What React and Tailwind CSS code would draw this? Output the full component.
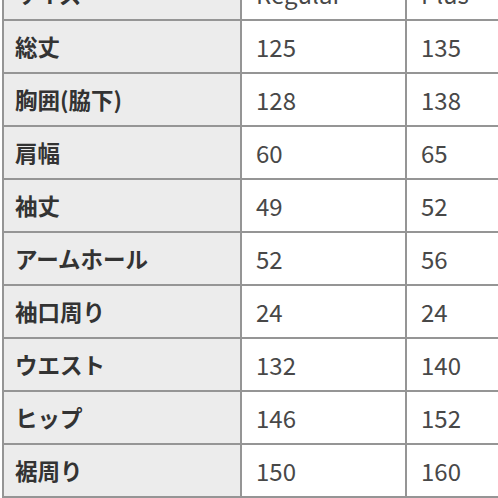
import React from 'react';

const rows = [
    ['総丈', '125', '135'],
    ['胸囲(脇下)', '128', '138'],
    ['肩幅', '60', '65'],
    ['袖丈', '49', '52'],
    ['アームホール', '52', '56'],
    ['袖口周り', '24', '24'],
    ['ウエスト', '132', '140'],
    ['ヒップ', '146', '152'],
    ['裾周り', '150', '160'],
];

const App = () => {
    return (
        <div className="w-[498px] h-[498px] overflow-hidden bg-white" style={{ fontFamily: '"Noto Sans CJK JP", "Noto Sans", sans-serif' }}>
            <table className="mt-[-34px] ml-[2px] w-[570px] table-fixed border-collapse">
                <colgroup>
                    <col className="w-[238px]" />
                    <col className="w-[165px]" />
                    <col className="w-[167px]" />
                </colgroup>
                <tbody>
                    <tr className="h-[53px]">
                        <td className="border-2 border-[#959595] bg-[#ececec] pl-[11px] text-[22.5px] font-bold text-[#333] leading-none">サイズ</td>
                        <td className="border-2 border-[#959595] bg-white pl-[14px] text-[24px] text-[#484848] leading-none">Regular</td>
                        <td className="border-2 border-[#959595] bg-white pl-[14px] text-[24px] text-[#484848] leading-none">Plus</td>
                    </tr>
                    {rows.map(([label, reg, plus]) => (
                        <tr key={label} className="h-[53px]">
                            <td className="border-2 border-[#959595] bg-[#ececec] pl-[11px] text-[22.5px] font-bold text-[#333] leading-none">{label}</td>
                            <td className="border-2 border-[#959595] bg-white pl-[14px] text-[24px] text-[#484848] leading-none">{reg}</td>
                            <td className="border-2 border-[#959595] bg-white pl-[14px] text-[24px] text-[#484848] leading-none">{plus}</td>
                        </tr>
                    ))}
                </tbody>
            </table>
        </div>
    );
};

export default App;
